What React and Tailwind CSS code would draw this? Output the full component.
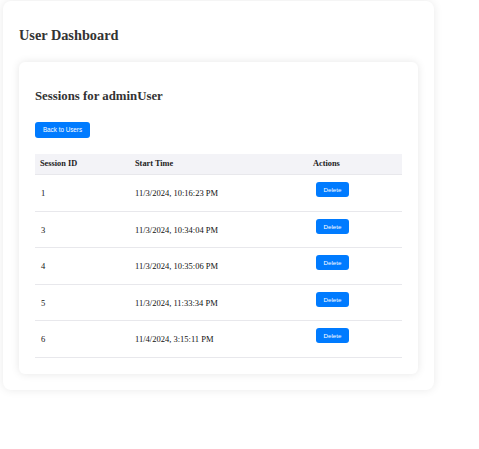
import React from 'react';

// Сессии пользователя
const sessions = [
  { id: 1, start: '11/3/2024, 10:16:23 PM' },
  { id: 3, start: '11/3/2024, 10:34:04 PM' },
  { id: 4, start: '11/3/2024, 10:35:06 PM' },
  { id: 5, start: '11/3/2024, 11:33:34 PM' },
  { id: 6, start: '11/4/2024, 3:15:11 PM' },
];

const serif = { fontFamily: '"Liberation Serif", "Times New Roman", serif' };

const SessionRow = ({ session }) => (
  <div className="grid grid-cols-[95px_178px_95px] h-[36.6px] border-b border-[#e8e8ec] text-[8.5px] text-[#111]">
    <div className="flex items-center pl-[6px] pt-[1px]">{session.id}</div>
    <div className="flex items-center pl-[5px] pt-[1px]">{session.start}</div>
    <div className="pl-[8px] pt-[7px]">
      <button className="block h-[15px] w-[33px] rounded-[3px] bg-[#007bff] text-white text-[6.2px] font-['Liberation_Sans',Arial,sans-serif]">
        Delete
      </button>
    </div>
  </div>
);

const App = () => {
  return (
    <div className="bg-white min-h-[449px] pt-[1px]" style={serif}>
      <div className="ml-[3px] w-[431px] h-[389px] rounded-lg bg-white shadow-[0_0_10px_rgba(0,0,0,0.09)] px-4 pt-4">
        <h1 className="mt-[11px] mb-[20px] text-[14.3px] leading-none font-bold text-[#333]">User Dashboard</h1>

        <div className="rounded-md bg-white shadow-[0_0_8px_rgba(0,0,0,0.1)] p-4">
          <h2 className="mt-[12px] mb-[19px] text-[12.8px] leading-none font-bold text-[#333]">Sessions for adminUser</h2>

          <button className="block h-[16px] w-[55px] rounded-[3px] bg-[#007bff] text-white text-[6.3px] font-['Liberation_Sans',Arial,sans-serif]">
            Back to Users
          </button>

          {/* Таблица сессий */}
          <div className="mt-[16px]">
            <div className="grid grid-cols-[95px_178px_95px] h-[21px] items-center bg-[#f3f3f7] border-b border-[#e8e8ec] text-[8.3px] font-bold text-[#222]">
              <div className="pl-[5px]">Session ID</div>
              <div className="pl-[5px]">Start Time</div>
              <div className="pl-[5px]">Actions</div>
            </div>
            {sessions.map(s => (
              <SessionRow key={s.id} session={s} />
            ))}
          </div>
        </div>
      </div>
    </div>
  );
};

export default App;
